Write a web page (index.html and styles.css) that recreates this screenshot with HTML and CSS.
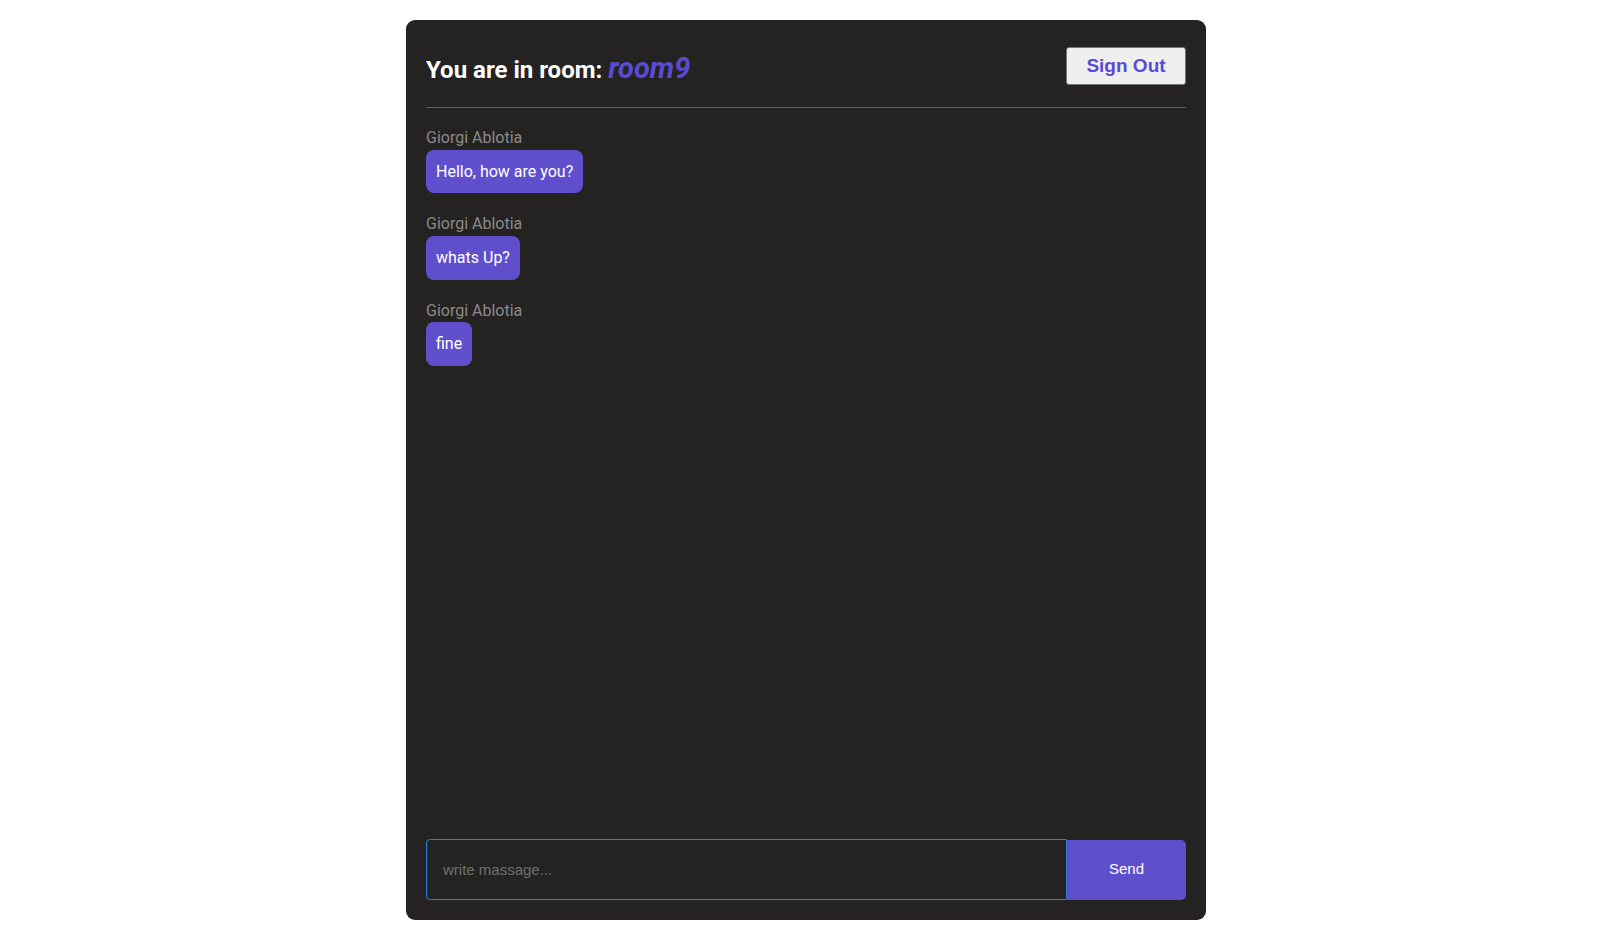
FILE: index.html
```html
<!DOCTYPE html>
<html lang="en">
<head>
<meta charset="utf-8">
<title>Chat room</title>
<link rel="stylesheet" href="styles.css">
</head>
<body>
<div class="chat">
  <header class="chat-header">
    <h2 class="chat-title">You are in room: <span class="room-name">room9</span></h2>
    <button class="sign-out">Sign Out</button>
  </header>
  <div class="messages">
    <div class="message">
      <div class="author">Giorgi Ablotia</div>
      <div class="bubble">Hello, how are you?</div>
    </div>
    <div class="message">
      <div class="author">Giorgi Ablotia</div>
      <div class="bubble">whats Up?</div>
    </div>
    <div class="message">
      <div class="author">Giorgi Ablotia</div>
      <div class="bubble">fine</div>
    </div>
  </div>
  <form class="composer">
    <input class="composer-input" type="text" placeholder="write massage...">
    <button class="send" type="button">Send</button>
  </form>
</div>
</body>
</html>
```
FILE: styles.css
```css
html, body {
  margin: 0;
  background: #ffffff;
}
body {
  padding: 20px 8px 0 0;
  font-family: Roboto, "Liberation Sans", Arial, sans-serif;
}
.chat {
  width: 800px;
  height: 900px;
  margin: 0 auto;
  background: #242322;
  border-radius: 9px;
  padding: 20px;
  box-sizing: border-box;
  display: flex;
  flex-direction: column;
}
.chat-header {
  display: flex;
  justify-content: space-between;
  align-items: center;
  padding: 7px 0 22px;
  border-bottom: 1px solid #5b4bc8;
}
.chat-title {
  margin: 0;
  padding-top: 3px;
  font-size: 24px;
  font-weight: 700;
  color: #ffffff;
}
.room-name {
  color: #5b4bd0;
  font-style: italic;
  font-size: 29px;
}
.sign-out {
  height: 38px;
  width: 120px;
  background: #efefef;
  border: 1px solid #767676;
  border-radius: 3px;
  color: #5b4bd0;
  font-family: "Liberation Sans", Arial, sans-serif;
  font-weight: 700;
  font-size: 19px;
  padding: 0;
}
.messages {
  flex: 1;
  padding-top: 20px;
  display: flex;
  flex-direction: column;
  gap: 21px;
  align-items: flex-start;
}
.message {
  display: flex;
  flex-direction: column;
  align-items: flex-start;
  gap: 2.5px;
}
.author {
  font-size: 16px;
  color: #8a8a8a;
}
.bubble {
  background: #5f4fcc;
  color: #ffffff;
  font-size: 16px;
  padding: 12.4px 10px;
  border-radius: 8px;
}
.composer {
  display: flex;
  margin: 0;
}
.composer-input {
  flex: 1;
  height: 61px;
  box-sizing: border-box;
  background: #242322;
  border: 1px solid #2b7fdc;
  border-radius: 4px 0 0 4px;
  padding: 0 16px;
  font-family: "Liberation Sans", Arial, sans-serif;
  font-size: 15px;
  color: #ffffff;
  outline: none;
}
.composer-input::placeholder {
  color: #6f6f6f;
}
.send {
  width: 119px;
  height: 60px;
  margin-top: 1px;
  padding: 0 0 3px;
  background: #5f4fcc;
  color: #ffffff;
  border: none;
  border-radius: 0 5px 5px 0;
  font-family: "Liberation Sans", Arial, sans-serif;
  font-size: 15px;
}
```
